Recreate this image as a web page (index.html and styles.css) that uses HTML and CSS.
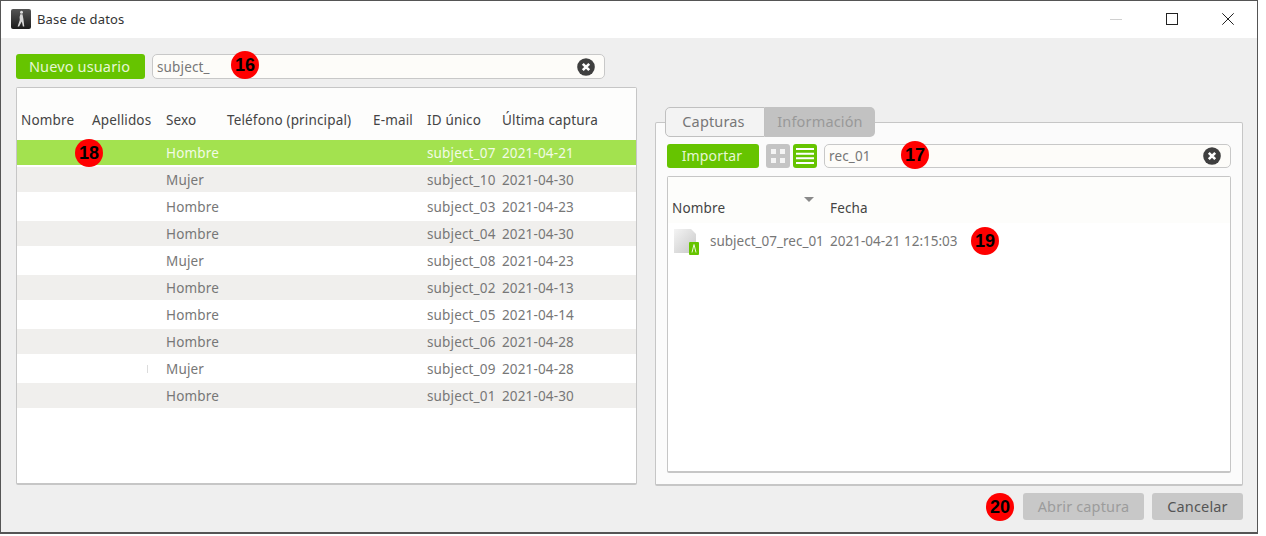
FILE: index.html
```html
<!DOCTYPE html>
<html lang="es">
<head>
<meta charset="utf-8">
<title>Base de datos</title>
<link rel="stylesheet" href="styles.css">
</head>
<body>
<div class="window">
  <header class="titlebar">
    <svg class="app-icon" width="20" height="20" viewBox="0 0 20 20"><defs><linearGradient id="ai" x1="0" y1="0" x2="0" y2="1"><stop offset="0" stop-color="#555"/><stop offset="1" stop-color="#1c1c1c"/></linearGradient></defs><rect width="20" height="20" rx="2" fill="url(#ai)"/><circle cx="10.500" cy="3.300" r="1.500" fill="#e0e0e0"/><path d="M9.300 5.300h2.200l.9 4.700.9 7.500h-1.400l-1.100-5-2.700 5H6.600l2.200-6.500-.2-3z" fill="#d8d8d8"/></svg>
    <span class="title">Base de datos</span>
    <span class="controls">
      <svg width="12" height="12" viewBox="0 0 12 12"><path d="M0 6.500h12" stroke="#d0d0d0" fill="none"/></svg>
      <svg width="12" height="12" viewBox="0 0 12 12"><rect x=".5" y=".5" width="11" height="11" fill="none" stroke="#222"/></svg>
      <svg width="12" height="12" viewBox="0 0 12 12"><path d="M.3.300l11.400 11.400M11.700.300L.3 11.700" stroke="#222" fill="none"/></svg>
    </span>
  </header>
  <main class="content">
    <div class="columns">
      <section class="left">
        <div class="toolbar">
          <button class="btn btn-green btn-new">Nuevo usuario</button>
          <div class="search search-users">
            <span>subject_</span>
            <svg class="clear" width="18" height="18" viewBox="0 0 18 18"><circle cx="9" cy="9" r="8.800" fill="#3f3f3f"/><path d="M5.800 5.800l6.400 6.400M12.200 5.800l-6.400 6.400" stroke="#fff" stroke-width="2.600"/></svg>
          </div>
        </div>
        <div class="panel users">
          <div class="row head"><span>Nombre</span><span>Apellidos</span><span>Sexo</span><span>Teléfono (principal)</span><span>E-mail</span><span>ID único</span><span>Última captura</span></div>
          <div class="row selected"><span></span><span></span><span>Hombre</span><span></span><span></span><span>subject_07</span><span>2021-04-21</span></div>
          <div class="row alt"><span></span><span></span><span>Mujer</span><span></span><span></span><span>subject_10</span><span>2021-04-30</span></div>
          <div class="row"><span></span><span></span><span>Hombre</span><span></span><span></span><span>subject_03</span><span>2021-04-23</span></div>
          <div class="row alt"><span></span><span></span><span>Hombre</span><span></span><span></span><span>subject_04</span><span>2021-04-30</span></div>
          <div class="row"><span></span><span></span><span>Mujer</span><span></span><span></span><span>subject_08</span><span>2021-04-23</span></div>
          <div class="row alt"><span></span><span></span><span>Hombre</span><span></span><span></span><span>subject_02</span><span>2021-04-13</span></div>
          <div class="row"><span></span><span></span><span>Hombre</span><span></span><span></span><span>subject_05</span><span>2021-04-14</span></div>
          <div class="row alt"><span></span><span></span><span>Hombre</span><span></span><span></span><span>subject_06</span><span>2021-04-28</span></div>
          <div class="row"><span></span><span class="tick"></span><span>Mujer</span><span></span><span></span><span>subject_09</span><span>2021-04-28</span></div>
          <div class="row alt"><span></span><span></span><span>Hombre</span><span></span><span></span><span>subject_01</span><span>2021-04-30</span></div>
        </div>
      </section>
      <section class="right">
        <div class="group">
          <div class="tabs"><span class="tab active">Capturas</span><span class="tab">Información</span></div>
          <div class="toolbar toolbar-rec">
            <button class="btn btn-green btn-import">Importar</button>
            <div class="views">
              <svg width="24" height="24" viewBox="0 0 24 24"><rect width="24" height="24" rx="3" fill="#c4c4c4"/><path d="M5 5h5v5H5zM14 5h5v5h-5zM5 14h5v5H5zM14 14h5v5h-5z" fill="#f4f4f4"/></svg>
              <svg width="24" height="24" viewBox="0 0 24 24"><rect width="24" height="24" rx="3" fill="#66c400"/><path d="M3 5h18M3 9.700h18M3 14.300h18M3 19h18" stroke="#fff" stroke-width="2"/></svg>
            </div>
            <div class="search search-rec">
              <span>rec_01</span>
              <svg class="clear" width="18" height="18" viewBox="0 0 18 18"><circle cx="9" cy="9" r="8.800" fill="#3f3f3f"/><path d="M5.800 5.800l6.400 6.400M12.200 5.800l-6.400 6.400" stroke="#fff" stroke-width="2.600"/></svg>
            </div>
          </div>
          <div class="panel files">
            <div class="file-head"><span class="fh-name">Nombre<i class="sort"></i></span><span>Fecha</span></div>
            <div class="file-row">
              <svg class="file-icon" width="26" height="27" viewBox="0 0 26 27"><defs><linearGradient id="fi" x1="0" y1="0" x2="1" y2="1"><stop offset="0" stop-color="#f4f4f4"/><stop offset="1" stop-color="#c8c8c8"/></linearGradient></defs><path d="M1 1h17l5 5v19H1z" fill="url(#fi)"/><rect x="16" y="14" width="10" height="13" rx="1" fill="#66c400"/><path d="M21 16.500l-2 8M21 16.500l2 8" stroke="#e8f7d8"/></svg>
              <span class="fr-name">subject_07_rec_01</span><span>2021-04-21 12:15:03</span>
            </div>
          </div>
        </div>
      </section>
    </div>
    <footer class="footer">
      <button class="btn btn-grey btn-open">Abrir captura</button>
      <button class="btn btn-grey btn-cancel">Cancelar</button>
    </footer>
  </main>
  <span class="badge b16">16</span>
  <span class="badge b18">18</span>
  <span class="badge b17">17</span>
  <span class="badge b19">19</span>
  <span class="badge b20">20</span>
</div>
</body>
</html>
```
FILE: styles.css
```css
* { box-sizing: border-box; }
html, body { margin: 0; background: #fff; }
body { font-family: "Noto Sans", "Open Sans", sans-serif; font-size: 13.500px; letter-spacing: .15px; color: #444; overflow: hidden; }
.window { position: relative; width: 1258px; height: 534px; border: 1px solid #555; border-bottom-width: 2px; display: flex; flex-direction: column; background: #efefef; }
.titlebar { height: 37px; flex: none; background: #fff; display: flex; align-items: center; padding: 0 0 2px 10px; }
.app-icon { margin-right: 6px; }
.title { font-size: 13px; color: #333; }
.controls { margin-left: auto; margin-right: 23px; display: flex; gap: 44px; }
.content { flex: 1; padding: 16px 14px 0 15px; display: flex; flex-direction: column; }
.columns { display: flex; gap: 18px; height: 432px; }
.left { width: 622px; display: flex; flex-direction: column; gap: 8px; }
.right { width: 588px; padding-top: 68px; display: flex; }
.toolbar { display: flex; height: 25px; }
.btn { border: 0; border-radius: 3px; font: inherit; letter-spacing: .15px; padding: 0 0 2px; }
.btn-green { background: #66c400; color: #e6f7d3; }
.btn-new { width: 129px; font-size: 14.500px; padding-right: 2px; }
.search { background: #fdfcf9; border: 1px solid #c8c8c8; border-radius: 5px; display: flex; align-items: center; justify-content: space-between; padding: 0 9px 0 4px; color: #777; }
.search-users { margin-left: 7px; width: 453px; }
.panel { background: #fff; border: 1px solid #c6c6c6; border-bottom-width: 2px; border-radius: 2px; }
.users { height: 398px; }
.row { display: grid; grid-template-columns: 71px 74px 61px 146px 54px 75px 1fr; height: 27px; align-items: center; padding-left: 4px; color: #777; border-bottom: 2px solid transparent; background-clip: padding-box; }
.head { height: 52px; color: #444; padding-top: 17px; border-bottom: 0; padding-bottom: 5px; background: #fdfdfc; }
.selected { background-color: #a3e24f; color: #f2fbe6; }
.alt { background-color: #f0efed; }
.tick { width: 1px; height: 8px; margin-left: 55px; background: #dcdcdc; }
.group { flex: 1; height: 364px; background: #fbfbfb; border: 1px solid #c6c6c6; border-bottom-width: 2px; border-radius: 2px; padding: 0 11px; display: flex; flex-direction: column; }
.tabs { display: flex; margin: -16px 0 0 -2px; height: 30px; font-size: 14.500px; }
.tab { background: #c2c2c2; color: #999; display: flex; align-items: center; justify-content: center; border-radius: 0 5px 5px 0; width: 110px; padding-bottom: 2px; }
.tab.active { width: 100px; background: #f3f3f3; color: #777; border: 1px solid #c0c0c0; border-radius: 5px 0 0 5px; padding-right: 3px; }
.toolbar-rec { margin-top: 7px; height: 24px; }
.btn-import { width: 92px; font-size: 14px; padding-right: 2px; }
.views { display: flex; gap: 3px; margin-left: 7px; }
.search-rec { margin-left: 7px; width: 407px; }
.files { margin-top: 8px; width: 564px; height: 297px; }
.file-head { display: flex; height: 46px; padding: 15px 0 0 4px; background: #fdfdfb; color: #444; align-items: center; }
.fh-name { position: relative; width: 158px; }
.sort { position: absolute; left: 132px; top: -2px; width: 0; height: 0; border: 5px solid transparent; border-top-color: #8a8a8a; border-bottom-width: 0; }
.file-row { display: flex; align-items: center; height: 36px; padding-left: 5px; color: #777; letter-spacing: 0; }
.file-icon { flex: none; margin-right: 11px; }
.fr-name { width: 120px; }
.footer { display: flex; justify-content: flex-end; gap: 8px; margin-top: 7px; }
.btn-grey { height: 27px; background: #c8c8c8; font-size: 14.500px; }
.btn-open { width: 121px; color: #9c9c9c; }
.btn-cancel { width: 91px; color: #555; }
.badge { position: absolute; width: 28px; height: 28px; border-radius: 50%; background: #f00; color: #000; font: bold 18px "Liberation Sans", sans-serif; letter-spacing: 0; display: flex; align-items: center; justify-content: center; }
.b16 { left: 230px; top: 50px; }
.b18 { left: 74px; top: 138px; }
.b17 { left: 900px; top: 140px; }
.b19 { left: 970px; top: 226px; }
.b20 { left: 985px; top: 492px; }
```
